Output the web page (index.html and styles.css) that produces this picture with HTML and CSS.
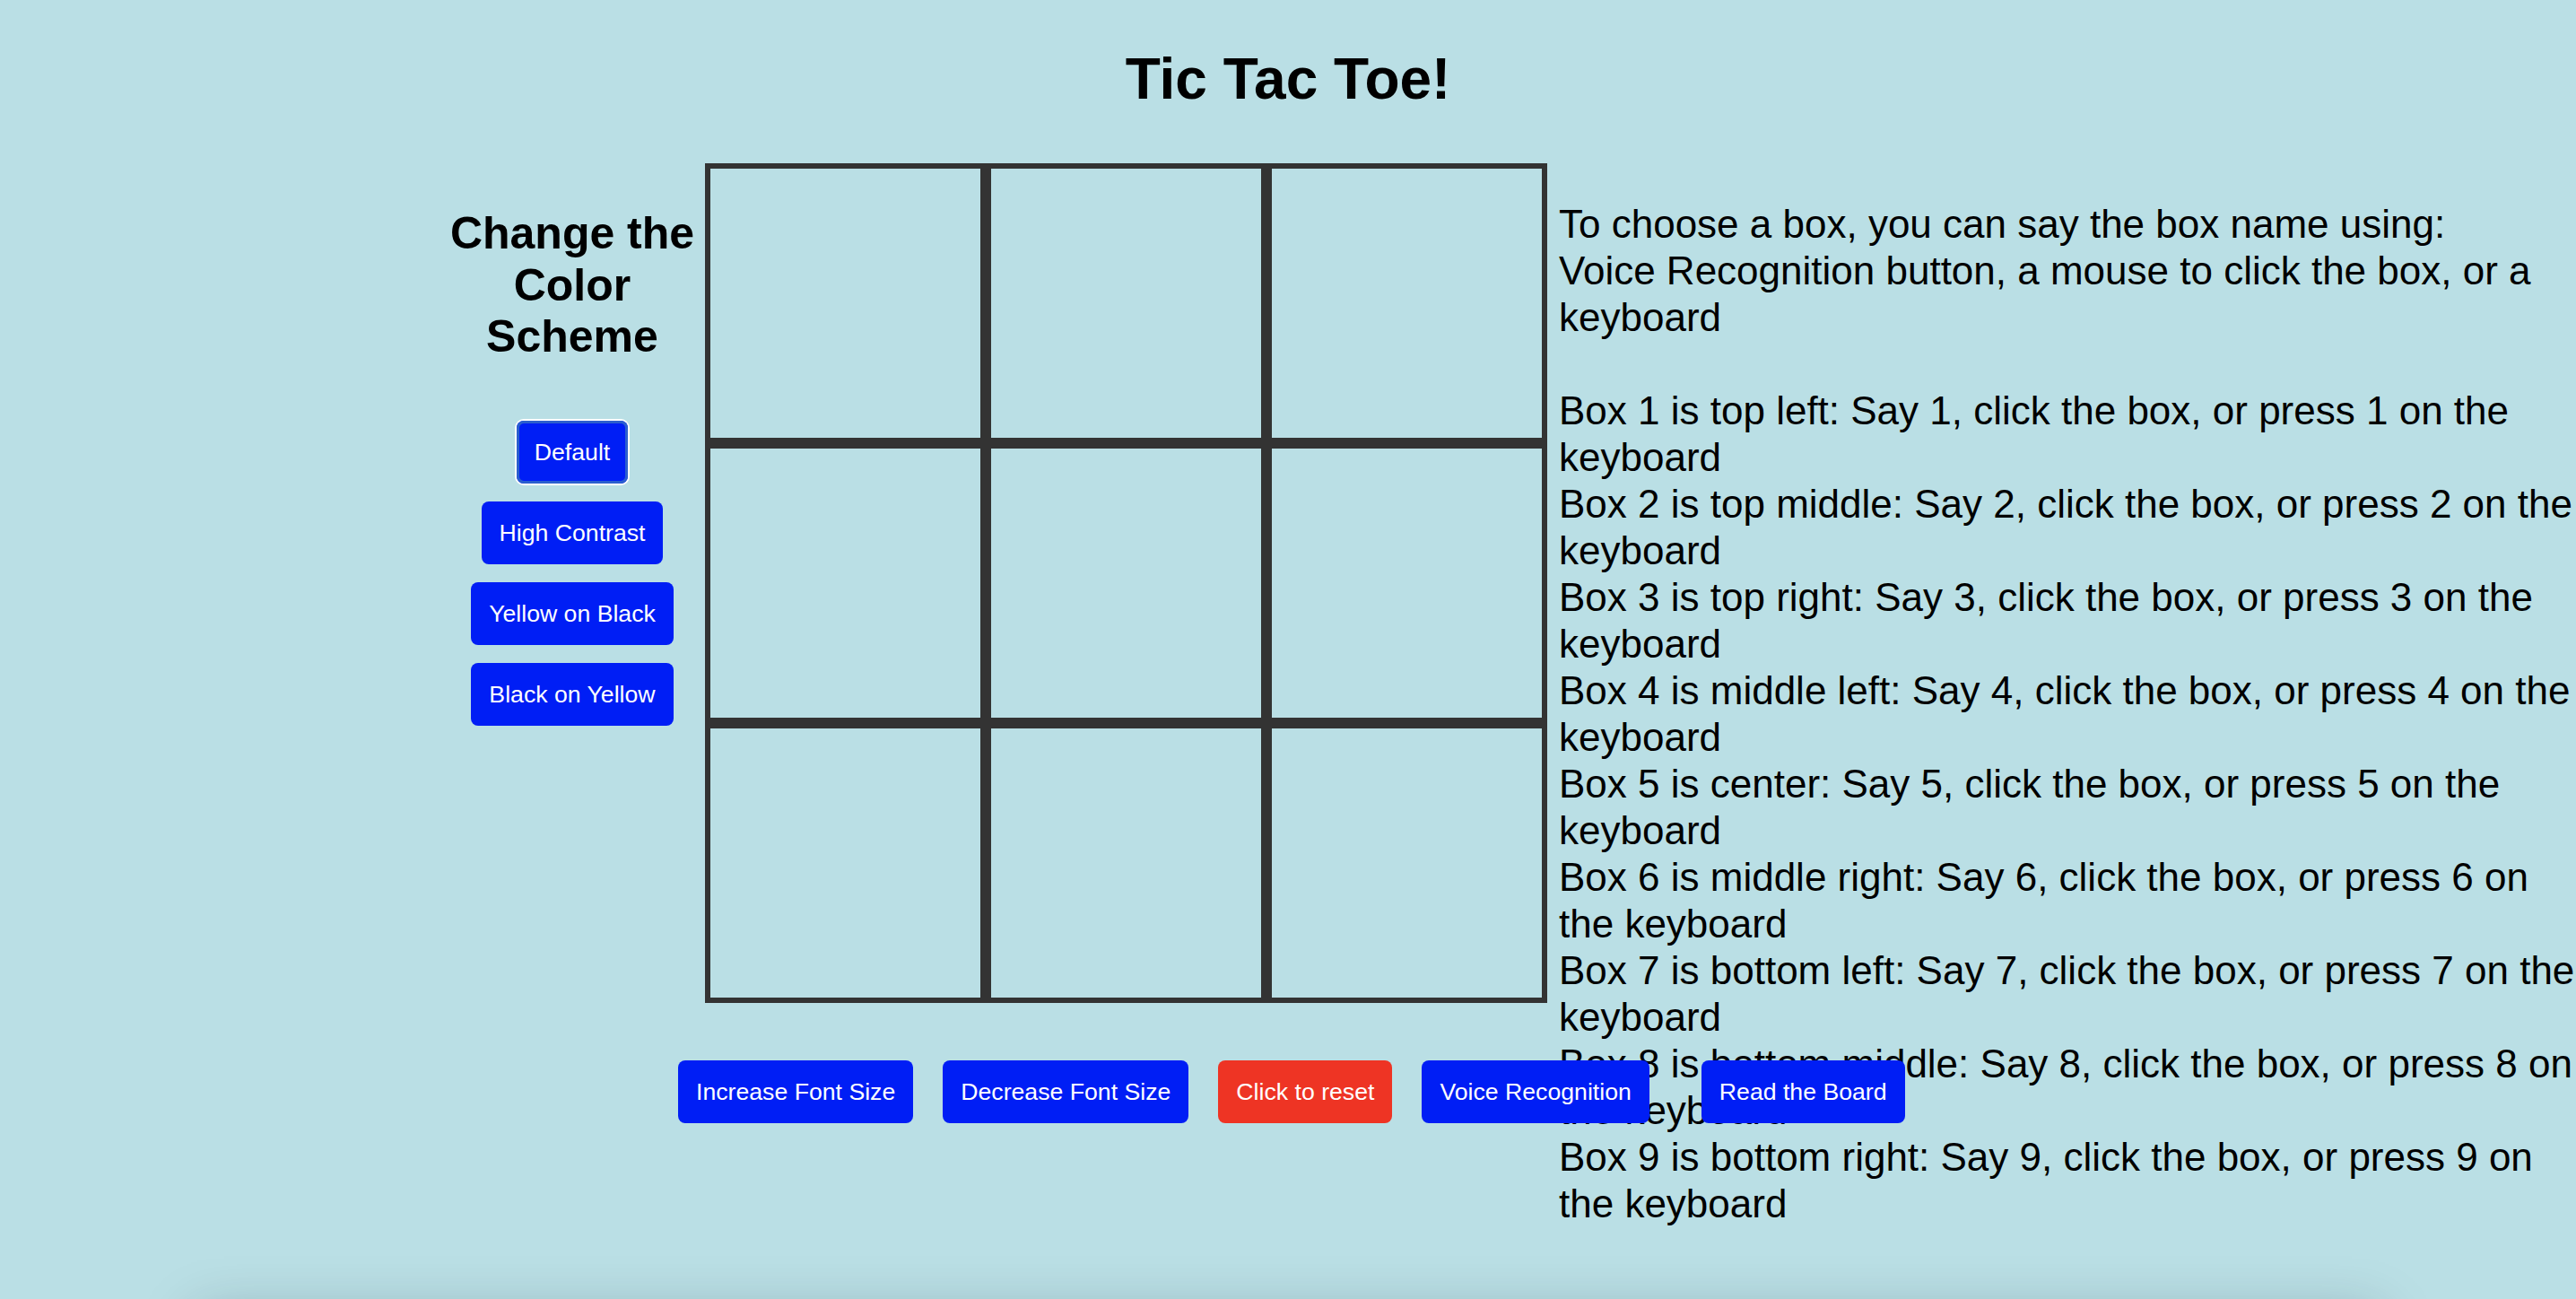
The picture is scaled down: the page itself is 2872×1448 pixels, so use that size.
FILE: index.html
```html
<!DOCTYPE html>
<html lang="en">
<head>
<meta charset="utf-8">
<title>Tic Tac Toe!</title>
<link rel="stylesheet" href="styles.css">
</head>
<body>
<h1 class="title">Tic Tac Toe!</h1>
<main class="layout">
  <aside class="scheme">
    <h2 class="scheme-title">Change the Color Scheme</h2>
    <div class="scheme-buttons">
      <button class="btn btn-focus">Default</button>
      <button class="btn">High Contrast</button>
      <button class="btn">Yellow on Black</button>
      <button class="btn">Black on Yellow</button>
    </div>
  </aside>
  <section class="game">
    <div class="board">
      <div class="cell"></div><div class="cell"></div><div class="cell"></div>
      <div class="cell"></div><div class="cell"></div><div class="cell"></div>
      <div class="cell"></div><div class="cell"></div><div class="cell"></div>
    </div>
    <div class="controls">
      <button class="btn">Increase Font Size</button>
      <button class="btn">Decrease Font Size</button>
      <button class="btn btn-red">Click to reset</button>
      <button class="btn">Voice Recognition</button>
      <button class="btn btn-read">Read the Board</button>
    </div>
  </section>
  <div class="help">
    <p class="help-p">To choose a box, you can say the box name using:<br>Voice Recognition button, a mouse to click the box, or a<br>keyboard</p>
    <p class="help-p help-gap">Box 1 is top left: Say 1, click the box, or press 1 on the<br>keyboard<br>Box 2 is top middle: Say 2, click the box, or press 2 on the<br>keyboard<br>Box 3 is top right: Say 3, click the box, or press 3 on the<br>keyboard<br>Box 4 is middle left: Say 4, click the box, or press 4 on the<br>keyboard<br>Box 5 is center: Say 5, click the box, or press 5 on the<br>keyboard<br>Box 6 is middle right: Say 6, click the box, or press 6 on<br>the keyboard<br>Box 7 is bottom left: Say 7, click the box, or press 7 on the<br>keyboard<br>Box 8 is bottom middle: Say 8, click the box, or press 8 on<br>the keyboard<br>Box 9 is bottom right: Say 9, click the box, or press 9 on<br>the keyboard</p>
  </div>
</main>
<div class="footer"><div class="footer-shade"></div></div>
</body>
</html>
```

FILE: styles.css
```css
html, body {
  margin: 0;
  padding: 0;
}
body {
  background: #badfe5;
  color: #000;
  font-family: "Liberation Sans", Arial, Helvetica, sans-serif;
  overflow: hidden;
}
.title {
  margin: 51px 0 57px;
  font-size: 64px;
  line-height: 74px;
  font-weight: bold;
  text-align: center;
}
.layout {
  display: flex;
  align-items: flex-start;
  padding-left: 490px;
}
.scheme {
  flex: 0 0 296px;
  display: flex;
  flex-direction: column;
  align-items: center;
  text-align: center;
}
.scheme-title {
  margin: 50px 0 64px;
  font-size: 50px;
  line-height: 57.5px;
  font-weight: bold;
}
.scheme-buttons {
  display: flex;
  flex-direction: column;
  align-items: center;
  gap: 20px;
}
.btn {
  font-family: "Liberation Sans", Arial, Helvetica, sans-serif;
  font-size: 26.67px;
  line-height: 30px;
  padding: 20px 20px;
  border: none;
  border-radius: 8px;
  background: #001ef5;
  color: #fff;
  white-space: nowrap;
}
.btn-focus {
  box-shadow: inset 0 0 0 3px #2b5fce, 0 0 0 2px #ffffff;
}
.btn-red {
  background: #ee3424;
}
.game {
  flex: 0 0 940px;
  width: 940px;
  min-width: 0;
}
.board {
  display: grid;
  grid-template-columns: repeat(3, 313px);
  grid-template-rows: repeat(3, 312px);
}
.cell {
  border: 6px solid #333333;
}
.controls {
  position: relative;
  z-index: 1;
  display: flex;
  gap: 33px;
  width: max-content;
  margin: 64px 0 0 -30px;
}
.btn-read {
  margin-left: 25px;
}
.help {
  flex: 0 0 auto;
  padding: 42px 0 0 12px;
  font-size: 44px;
  line-height: 52px;
  white-space: nowrap;
}
.help-p {
  margin: 0;
}
.help-gap {
  margin-top: 52px;
}
.footer {
  height: 80px;
  overflow: hidden;
}
.footer-shade {
  margin: 100px 220px 0;
  height: 200px;
  background: #badfe5;
  box-shadow: 0 0 60px 0 rgba(0, 30, 40, 0.28);
}
```
